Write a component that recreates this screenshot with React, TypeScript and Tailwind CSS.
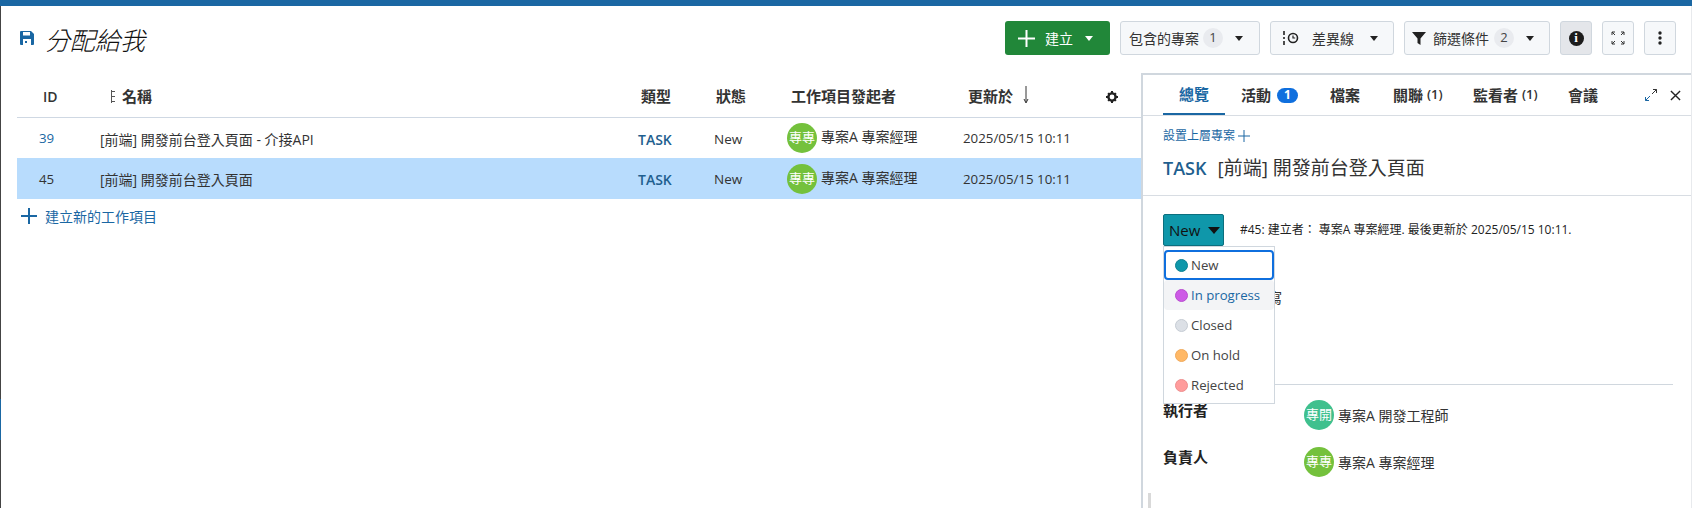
const font = "font-['Open_Sans','Noto_Sans_CJK_TC',sans-serif]";

function Caret({ w = 8, h = 5, className = "" }: { w?: number; h?: number; className?: string }) {
  return (
    <svg width={w} height={h} viewBox="0 0 10 6" preserveAspectRatio="none" className={`shrink-0 ${className}`}>
      <path d="M0 0h10L5 6z" fill="currentColor" />
    </svg>
  );
}

function Plus({ size = 16, stroke = 2, color = "#1a67a3" }: { size?: number; stroke?: number; color?: string }) {
  return (
    <svg width={size} height={size} viewBox={`0 0 ${size} ${size}`} className="shrink-0">
      <path d={`M${size / 2} 0v${size}M0 ${size / 2}h${size}`} stroke={color} strokeWidth={stroke} />
    </svg>
  );
}

function Avatar({ text, bg }: { text: string; bg: string }) {
  return (
    <span className={`flex h-[30px] w-[30px] shrink-0 items-center justify-center rounded-full text-[13px] text-white ${bg}`}>{text}</span>
  );
}

function ToolButton({ children, active }: { children: React.ReactNode; active?: boolean }) {
  return (
    <button className={`flex h-[34px] w-[32px] items-center justify-center rounded-[3px] border border-[#d0d7de] ${active ? "bg-[#e4e6ea]" : "bg-[#f6f8fa]"}`}>
      {children}
    </button>
  );
}

function Count({ n }: { n: number }) {
  return <span className="flex h-[20px] w-[20px] shrink-0 items-center justify-center rounded-full bg-[#e9ebef] text-[13px] text-[#444]">{n}</span>;
}

function Row({ id, title, selected }: { id: number; title: string; selected?: boolean }) {
  return (
    <div className={`flex items-center pt-[2px] text-[14px] text-[#333] ${selected ? "h-[41px] bg-[#b8dcfd]" : "h-[40px]"}`}>
      <span className={`w-[83px] pl-[22px] text-[13.3px] ${selected ? "" : "text-[#1a67a3]"}`}>{id}</span>
      <span className="w-[538px] truncate">{title}</span>
      <span className="w-[76px] text-[14px] font-semibold text-[#1f5f8f]">TASK</span>
      <span className="w-[73px] text-[13.5px]">New</span>
      <span className="-mt-[2px] flex w-[176px] items-center gap-[4px]">
        <Avatar text="專專" bg="bg-[#74c13c]" />
        <span className="-mt-[3px]">專案A 專案經理</span>
      </span>
      <span className="text-[13.3px]">2025/05/15 10:11</span>
    </div>
  );
}

const statuses = [
  { label: "New", dot: "bg-[#0f97aa] border-[#0c8192]" },
  { label: "In progress", dot: "bg-[#cd5ae6] border-[#b94dd0]" },
  { label: "Closed", dot: "bg-[#dce0e6] border-[#c6ccd4]" },
  { label: "On hold", dot: "bg-[#ffb866] border-[#f0aa5c]" },
  { label: "Rejected", dot: "bg-[#ff9c9c] border-[#ee8e8e]" },
];

export default function App() {
  return (
    <div className={`relative flex h-[508px] w-[1692px] flex-col overflow-hidden bg-white ${font}`}>
      <div className="h-[6px] shrink-0 bg-[#1a67a3]" />
      <div className="flex min-h-0 flex-1 flex-col border-l border-r border-l-[#444] border-r-[#e8eaed]">
        {/* Toolbar */}
        <div className="flex h-[67px] shrink-0 items-center pb-[3px] pl-[19px] pr-[15px]">
          <svg width="14" height="14" viewBox="0 0 14 14" className="shrink-0">
            <path d="M0 1a1 1 0 0 1 1-1h10l3 3v10a1 1 0 0 1-1 1H1a1 1 0 0 1-1-1z" fill="#1a67a3" />
            <rect x="3" y="1" width="7" height="3.5" fill="#fff" />
            <rect x="3" y="8" width="8" height="6" fill="#fff" />
            <rect x="5" y="10" width="2" height="2" fill="#1a67a3" />
          </svg>
          <h1 className="ml-[11px] mt-[6px] text-[25px] font-light italic text-[#111]">分配給我</h1>
          <div className="ml-auto flex items-center gap-[10px] text-[14px] text-[#333]">
            <button className="flex h-[34px] w-[105px] items-center rounded-[3px] bg-[#218739] pl-[13px] text-white">
              <Plus size={17} color="#fff" />
              <span className="ml-[10px]">建立</span>
              <Caret className="ml-[12px]" />
            </button>
            <button className="flex h-[34px] w-[140px] items-center rounded-[3px] border border-[#d0d7de] bg-[#f6f8fa] pl-[8px]">
              包含的專案
              <span className="ml-[4px]"><Count n={1} /></span>
              <Caret className="ml-[12px] text-[#222]" />
            </button>
            <button className="flex h-[34px] w-[124px] items-center rounded-[3px] border border-[#d0d7de] bg-[#f6f8fa] pl-[12px]">
              <svg width="16" height="14" viewBox="0 0 16 14" fill="none" stroke="#222" className="shrink-0">
                <path d="M1 0v4M1 6v2M1 10v4" strokeWidth="1.6" />
                <circle cx="10" cy="7" r="4.5" strokeWidth="1.6" />
                <path d="M10 4.5V7h2.2" strokeWidth="1.2" />
              </svg>
              <span className="ml-[13px]">差異線</span>
              <Caret className="ml-[16px] text-[#222]" />
            </button>
            <button className="flex h-[34px] w-[146px] items-center rounded-[3px] border border-[#d0d7de] bg-[#f6f8fa] pl-[7px]">
              <svg width="14" height="14" viewBox="0 0 14 14" className="shrink-0">
                <path d="M0 1h14L8.5 7.5V14l-3-2V7.5z" fill="#222" />
              </svg>
              <span className="ml-[7px]">篩選條件</span>
              <span className="ml-[5px]"><Count n={2} /></span>
              <Caret className="ml-[12px] text-[#222]" />
            </button>
            <ToolButton active>
              <span className="flex h-[15px] w-[15px] items-center justify-center rounded-full bg-[#1c1c1c] font-['Liberation_Serif',serif] text-[13px] font-bold text-white">i</span>
            </ToolButton>
            <ToolButton>
              <svg width="14" height="14" viewBox="0 0 14 14" fill="none" stroke="#333" strokeWidth="1">
                <path d="M1 4V1h3M1 1l3 3M10 1h3v3M13 1l-3 3M1 10v3h3M1 13l3-3M13 10v3h-3M13 13l-3-3" />
              </svg>
            </ToolButton>
            <ToolButton>
              <svg width="4" height="14" viewBox="0 0 4 14" fill="#222">
                <circle cx="2" cy="2" r="1.7" />
                <circle cx="2" cy="7" r="1.7" />
                <circle cx="2" cy="12" r="1.7" />
              </svg>
            </ToolButton>
          </div>
        </div>

        <div className="flex min-h-0 flex-1">
          {/* Work package table */}
          <div className="w-[1140px] shrink-0 pl-[16px]">
            <div className="flex h-[45px] items-center border-b border-[#cfd8e3] pt-[3px] text-[15px] font-semibold text-[#333]">
              <span className="w-[94px] pl-[26px] text-[14px]">ID</span>
              <span className="flex w-[530px] items-center">
                <svg width="4" height="13" viewBox="0 0 4 13" fill="none" stroke="#555" className="mr-[7px] shrink-0">
                  <path d="M.5 0v13M0 1.5h4M0 6.5h4M0 11.5h4" />
                </svg>
                名稱
              </span>
              <span className="w-[75px]">類型</span>
              <span className="w-[75px]">狀態</span>
              <span className="w-[177px]">工作項目發起者</span>
              <span className="flex w-[138px] items-center gap-[10px]">
                更新於
                <svg width="6" height="18" viewBox="0 0 6 18" fill="none" stroke="#333" className="-mt-[3px]"><path d="M3 0v16M1 13l2 4 2-4" /></svg>
              </span>
              <svg width="12" height="12" viewBox="0 0 12 12" fill="#222">
                <circle cx="6" cy="6" r="3.6" fill="none" stroke="#222" strokeWidth="2.4" />
                <path d="M5 0h2v2H5zM5 10h2v2H5zM0 5h2v2H0zM10 5h2v2h-2zM1.4 2.8l1.4-1.4 1.2 1.2-1.4 1.4zM8 9.4l1.4-1.4 1.2 1.2-1.4 1.4zM8 2.6l1.2-1.2 1.4 1.4-1.2 1.2zM1.4 9.2l1.2-1.2 1.4 1.4-1.2 1.2z" />
              </svg>
            </div>
            <Row id={39} title="[前端] 開發前台登入頁面 - 介接API" />
            <Row id={45} title="[前端] 開發前台登入頁面" selected />
            <div className="flex h-[34px] items-center pl-[4px] text-[14px] text-[#1a67a3]">
              <Plus size={16} />
              <span className="ml-[8px]">建立新的工作項目</span>
            </div>
          </div>

          {/* Details panel */}
          <div className="relative min-w-0 flex-1 border-l-[2.5px] border-t-[2.5px] border-[#d0d7de]">
            <div className="flex h-[41px] items-start border-b border-[#d8dde3] pl-[20px] pr-[10px] text-[15px] font-semibold text-[#333]">
              <span className="flex h-[40px] w-[62px] items-center justify-center border-b-2 border-[#1a67a3] text-[#1a67a3]">總覽</span>
              <span className="ml-[16px] flex h-[40px] items-center gap-[6px]">
                活動<span className="flex h-[15px] w-[21px] items-center justify-center rounded-full bg-[#0f6fde] text-[12px] font-bold text-white">1</span>
              </span>
              <span className="ml-[32px] flex h-[40px] items-center">檔案</span>
              <span className="ml-[33px] flex h-[40px] w-[47px] items-center whitespace-pre">關聯 <span className="text-[13px]">(1)</span></span>
              <span className="ml-[33px] flex h-[40px] w-[63px] items-center whitespace-pre">監看者 <span className="text-[13px]">(1)</span></span>
              <span className="ml-[32px] flex h-[40px] items-center">會議</span>
              <span className="ml-auto flex h-[40px] items-center gap-[13px]">
                <svg width="12" height="12" viewBox="0 0 12 12" fill="none" strokeWidth="1">
                  <path d="M7 5l4.5-4.5M8 .5h3.5V4" stroke="#333" />
                  <path d="M5 7L.5 11.5M.5 8v3.5H4" stroke="#1a67a3" />
                </svg>
                <svg width="11" height="11" viewBox="0 0 12 12" stroke="#222" strokeWidth="1.5">
                  <path d="M1 1l10 10M11 1L1 11" />
                </svg>
              </span>
            </div>
            <div className="px-[20px] pt-[12px]">
              <div className="flex h-[16px] items-center gap-[3px] text-[12px] text-[#1a67a3]">
                設置上層專案<Plus size={12} stroke={1} />
              </div>
              <div className="mt-[7px] flex h-[34px] items-center text-[19px] text-[#333]">
                <span className="text-[18px] font-semibold text-[#1f5f8f]">TASK</span>
                <span className="ml-[11px]">[前端] 開發前台登入頁面</span>
              </div>
            </div>
            <div className="mt-[10px] border-t border-[#d8dde3] pl-[20px] pr-[18px] pt-[18px]">
              <div className="flex items-center">
                <button className="flex h-[32px] w-[61px] items-center rounded-[2px] border border-[#0c6f7e] bg-[#0f97aa] pl-[5px] text-[15px] text-[#111]">
                  New
                  <Caret w={12} h={7} className="ml-[8px]" />
                </button>
                <span className="ml-[16px] text-[12px] text-[#222]">#45: 建立者： 專案A 專案經理. 最後更新於 2025/05/15 10:11.</span>
              </div>
              {/* only the tail of this line shows past the open dropdown */}
              <div className="mt-[42px] h-[20px] pl-[105px] text-[14px] leading-[20px] text-[#333]">寫</div>
              <div className="mt-[76px] border-t border-[#d0d7de] pt-[15px]">
                <div className="flex h-[30px] text-[14px] text-[#333]">
                  <span className="-mt-[1px] w-[141px] text-[15px] font-semibold text-[#222]">執行者</span>
                  <Avatar text="專開" bg="bg-[#3fc08e]" />
                  <span className="ml-[4px] self-center">專案A 開發工程師</span>
                </div>
                <div className="mt-[17px] flex h-[30px] text-[14px] text-[#333]">
                  <span className="-mt-[1px] w-[141px] text-[15px] font-semibold text-[#222]">負責人</span>
                  <Avatar text="專專" bg="bg-[#74c13c]" />
                  <span className="ml-[4px] self-center">專案A 專案經理</span>
                </div>
              </div>
            </div>

            {/* Status dropdown */}
            <div className="absolute left-[20px] top-[171px] w-[112px] border border-[#d0d7de] bg-white pb-[3px] pt-[3px] text-[13.2px] text-[#444]">
              {statuses.map((s, i) => (
                <div
                  key={s.label}
                  className={`flex h-[30px] items-center gap-[3px] rounded-[4px] ${i === 0 ? "border-2 border-[#0f6fde] pl-[9px]" : "pl-[11px]"} ${i === 1 ? "bg-[#f3f4f6] text-[#1a67a3]" : ""}`}
                >
                  <span className={`h-[13px] w-[13px] shrink-0 rounded-full border ${s.dot}`} />
                  <span className="pt-[2px]">{s.label}</span>
                </div>
              ))}
            </div>

            {/* Resize handle */}
            <div className="absolute bottom-0 left-[5px] h-[15px] w-[3px] bg-[#d9d9d9]" />
          </div>
        </div>
      </div>
      {/* Highlight on the window edge */}
      <div className="absolute left-0 top-[399px] h-[41px] w-[1px] bg-[#1a67a3]" />
    </div>
  );
}
